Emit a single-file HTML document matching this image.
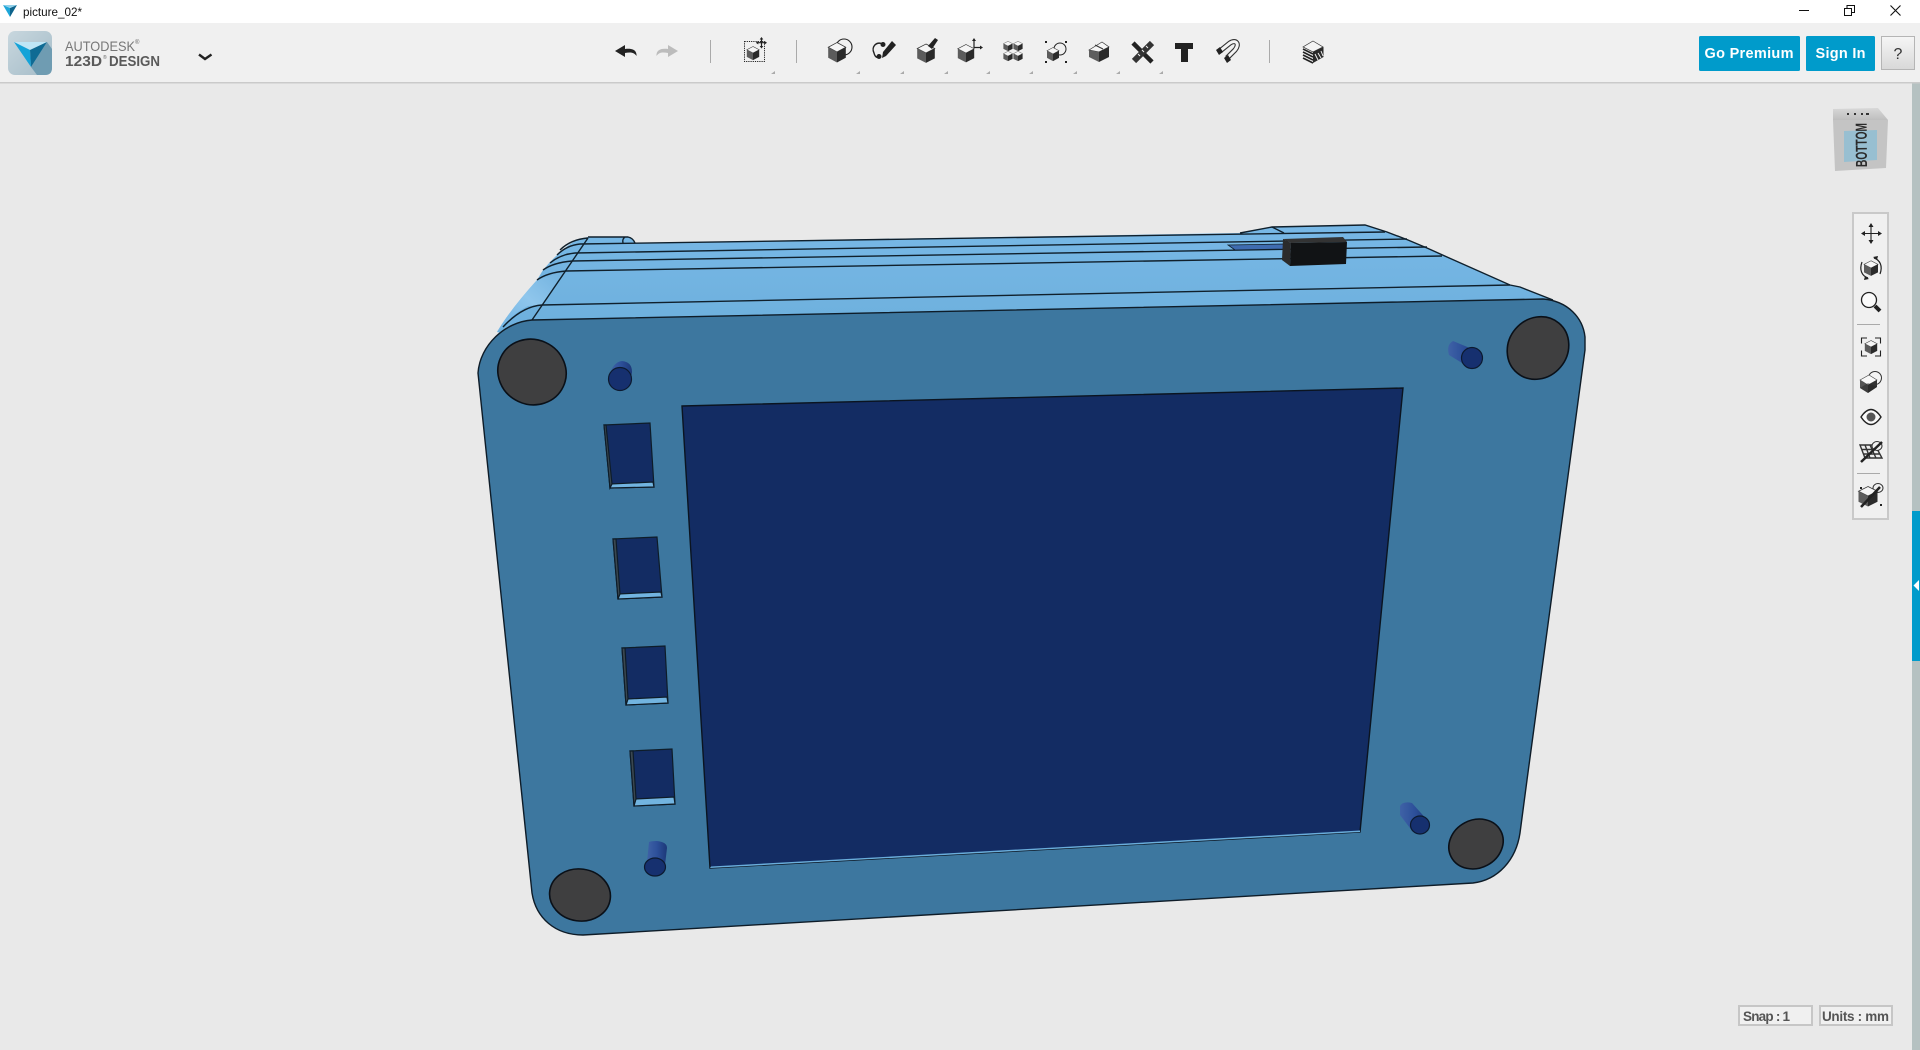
<!DOCTYPE html>
<html><head><meta charset="utf-8"><title>picture_02*</title>
<style>
html,body{margin:0;padding:0;width:1920px;height:1050px;overflow:hidden;background:#e9e9e9}
svg{display:block;position:absolute;left:0;top:0}
text{font-family:"Liberation Sans",sans-serif}
</style></head><body>
<svg width="1920" height="1050" viewBox="0 0 1920 1050" xmlns="http://www.w3.org/2000/svg">
<defs>
<linearGradient id="topg" x1="0" y1="0" x2="0" y2="1"><stop offset="0" stop-color="#78b8e6"/><stop offset="1" stop-color="#6cafdc"/></linearGradient>
<linearGradient id="sideg" x1="0" y1="1" x2="1" y2="0"><stop offset="0" stop-color="#6fb3e3"/><stop offset=".5" stop-color="#8fc6ec"/><stop offset="1" stop-color="#6fb0de"/></linearGradient>
<linearGradient id="logog" x1="0" y1="0" x2="1" y2="1"><stop offset="0" stop-color="#c8d7de"/><stop offset="1" stop-color="#a5bcc8"/></linearGradient>
<linearGradient id="help" x1="0" y1="0" x2="0" y2="1"><stop offset="0" stop-color="#f6f6f6"/><stop offset="1" stop-color="#d8d8d8"/></linearGradient>
<linearGradient id="pegg" x1="0" y1="0" x2="1" y2="0"><stop offset="0" stop-color="#3f62a6"/><stop offset=".5" stop-color="#2d509a"/><stop offset="1" stop-color="#1c3878"/></linearGradient>
<linearGradient id="cubetop" x1="0" y1="0" x2="0" y2="1"><stop offset="0" stop-color="#d8d8d8"/><stop offset="1" stop-color="#bcbcbc"/></linearGradient>
<g id="cube">
<polygon points="0,-10 10,-5 0,0 -10,-5" fill="#f5f5f5" stroke="#333" stroke-width=".8"/>
<polygon points="-10,-5 0,0 0,11 -10,6" fill="#5c5c5c"/>
<polygon points="10,-5 0,0 0,11 10,6" fill="#2a2a2a"/>
</g>
<polygon id="tri" points="0,3 4,0 4,3" fill="#aaa"/>
</defs>

<!-- title bar -->
<rect x="0" y="0" width="1920" height="23" fill="#fff"/>
<polygon points="3,5 10,8 10,17" fill="#1ea6d8"/>
<polygon points="17,5 10,8 10,17" fill="#0e648c"/>
<polygon points="3,5 17,5 10,8" fill="#8fd0ea"/>
<text x="23" y="16" font-size="12" fill="#111" textLength="59" lengthAdjust="spacingAndGlyphs">picture_02*</text>
<line x1="1799" y1="10.5" x2="1809" y2="10.5" stroke="#111" stroke-width="1"/>
<rect x="1844.5" y="8.5" width="7" height="7" fill="none" stroke="#111"/>
<path d="M1847 8.5V5.5H1854.5V12.5H1851.5" fill="none" stroke="#111"/>
<path d="M1890.5 5.5L1900.5 15.5M1900.5 5.5L1890.5 15.5" stroke="#111" stroke-width="1.1"/>

<!-- toolbar -->
<rect x="0" y="23" width="1920" height="59" fill="#f0f0f0"/>
<rect x="0" y="82" width="1920" height="1.5" fill="#cacaca"/>
<rect x="8" y="31" width="44" height="44" rx="7" fill="url(#logog)"/>
<path d="M47 42L31 67L37 75H45Q52 75 52 68V49Z" fill="#6f9cb2"/>
<polygon points="14,42 47,42 30,50" fill="#bfe6f6"/>
<polygon points="14,42 30,50 31,67" fill="#14a3d8"/>
<polygon points="47,42 30,50 31,67" fill="#0f6b94"/>
<text x="65" y="51" font-size="14" fill="#777" textLength="70" lengthAdjust="spacingAndGlyphs">AUTODESK</text>
<text x="135" y="44" font-size="6" fill="#666">®</text>
<text x="65" y="66" font-size="14.5" font-weight="bold" fill="#5a5a5a" textLength="37" lengthAdjust="spacingAndGlyphs">123D</text>
<text x="103" y="59" font-size="5" fill="#666">®</text>
<text x="109" y="66" font-size="14.5" font-weight="bold" fill="#5a5a5a" textLength="51" lengthAdjust="spacingAndGlyphs">DESIGN</text>
<path d="M199 54.5Q205 59 205 59Q205 59 211.5 54.5" fill="none" stroke="#222" stroke-width="2.4"/>

<!-- undo / redo -->
<path d="M615 51L625 45V49C632 48 637 50 636.500 56C634 52 630 52 625 53V57Z" fill="#222"/>
<path d="M678 51L668 45V49C661 48 656 50 656.500 56C659 52 663 52 668 53V57Z" fill="#bcbcbc"/>
<g stroke="#aaa" stroke-width="1"><line x1="710.500" y1="40" x2="710.500" y2="63"/><line x1="796.500" y1="40" x2="796.500" y2="63"/><line x1="1269.500" y1="40" x2="1269.500" y2="63"/></g>

<!-- move -->
<rect x="744.500" y="41.500" width="20" height="20" fill="none" stroke="#222" stroke-width="1" stroke-dasharray="1.200 1"/>
<use href="#cube" transform="translate(753,53) scale(.62,.65)"/>
<path d="M761.500 38V47.500M757 42.700H766" stroke="#222" stroke-width="1.200"/>
<path d="M761.500 37L759.700 39.500H763.300ZM761.500 48.500L759.700 46H763.300ZM755.800 42.700L758.300 41V44.500ZM767 42.700L764.500 41V44.500Z" fill="#222"/>

<!-- primitives -->
<circle cx="844" cy="47" r="8" fill="#f0f0f0" stroke="#222" stroke-width="1.100"/>
<use href="#cube" transform="translate(837,52) scale(.88,.95)"/>
<!-- sketch -->
<path d="M883 44C876 41 871 47 874 53C875 57 877 58 879 57" fill="none" stroke="#222" stroke-width="1.400"/>
<circle cx="883" cy="44.500" r="2.500" fill="#222"/><circle cx="879" cy="56.500" r="2.500" fill="#222"/>
<polygon points="892,41 896,45 886,56 882,58 883,52" fill="#222"/>
<!-- construct -->
<use href="#cube" transform="translate(926,53) scale(.88,.9)"/>
<polygon points="928,46 935,38 938,40 932,49" fill="#222"/>
<!-- modify/transform -->
<use href="#cube" transform="translate(966,53) scale(.82,.85)"/>
<path d="M974 40V47.500H981" fill="none" stroke="#222" stroke-width="1.200"/>
<path d="M974 38L972 41H976ZM983 47.500L980 45.500V49.500Z" fill="#222"/>
<!-- pattern -->
<use href="#cube" transform="translate(1008,46) scale(.46,.47)"/><use href="#cube" transform="translate(1018,46) scale(.46,.47)"/>
<use href="#cube" transform="translate(1008,56) scale(.46,.47)"/><use href="#cube" transform="translate(1018,56) scale(.46,.47)"/>
<!-- group -->
<circle cx="1060" cy="49" r="6" fill="#f0f0f0" stroke="#222" stroke-width="1"/>
<use href="#cube" transform="translate(1053,54) scale(.6,.65)"/>
<g fill="#222"><rect x="1045" y="41" width="2" height="2"/><rect x="1065" y="41" width="2" height="2"/><rect x="1045" y="61" width="2" height="2"/><rect x="1065" y="61" width="2" height="2"/></g>
<!-- combine -->
<polygon points="1089,50 1102,42 1109,47 1099,52" fill="#f5f5f5" stroke="#333" stroke-width=".7"/>
<line x1="1095" y1="45" x2="1103" y2="49" stroke="#333" stroke-width="1"/>
<polygon points="1089,50 1099,52 1099,62 1089,57" fill="#5e5e5e"/>
<polygon points="1099,52 1109,47 1109,57 1099,62" fill="#2a2a2a"/>
<!-- measure -->
<path d="M1133 43L1152 62" stroke="#222" stroke-width="4.500"/>
<path d="M1152 43L1134 61" stroke="#333" stroke-width="6"/>
<path d="M1138 54l2 2M1142 50l2 2M1146 46l2 2" stroke="#f0f0f0" stroke-width="1"/>
<!-- text T -->
<polygon points="1175,43 1193,43 1193,49 1188,49 1188,62 1181,62 1181,49 1175,49" fill="#222"/>
<!-- snap magnet -->
<path d="M1220 51L1230 43C1236 39 1240 44 1235 50L1227 58" fill="none" stroke="#333" stroke-width="5.200"/>
<path d="M1220 51L1230 43C1236 39 1240 44 1235 50L1227 58" fill="none" stroke="#f4f4f4" stroke-width="3"/>
<polygon points="1216,50 1220,47 1223,52 1219,55" fill="#222"/><polygon points="1224,58 1228,55 1231,60 1227,63" fill="#222"/>
<!-- layers -->
<polygon points="1313,41 1323,47 1313,52 1303,47" fill="#f4f4f4" stroke="#333" stroke-width=".7"/>
<path d="M1303 49L1313 54M1303 52L1313 57M1303 55L1313 60M1303 58L1313 63" fill="none" stroke="#222" stroke-width="1.600"/>
<polygon points="1313,52 1323.500,47 1323.500,57 1313,63" fill="#2a2a2a"/>
<path d="M1315 54L1318 60M1318 53L1321 58M1321 51L1323 56" stroke="#eee" stroke-width="1"/>

<!-- toolbar tris -->
<use href="#tri" x="771" y="71"/><use href="#tri" x="856" y="71"/><use href="#tri" x="900" y="71"/>
<use href="#tri" x="944" y="71"/><use href="#tri" x="986" y="71"/><use href="#tri" x="1029" y="71"/>
<use href="#tri" x="1073" y="71"/><use href="#tri" x="1116" y="71"/><use href="#tri" x="1159" y="71"/>

<!-- Buttons -->
<rect x="1699" y="36" width="101" height="35" rx="1.500" fill="#009bcb"/>
<text x="1749" y="58" font-size="14.500" font-weight="bold" fill="#fff" text-anchor="middle" textLength="89" lengthAdjust="spacing">Go Premium</text>
<rect x="1806" y="36" width="69" height="35" rx="1.500" fill="#009bcb"/>
<text x="1840.500" y="58" font-size="14.500" font-weight="bold" fill="#fff" text-anchor="middle" textLength="50" lengthAdjust="spacing">Sign In</text>
<rect x="1881.500" y="36.500" width="33" height="33" fill="url(#help)" stroke="#b5b5b5"/>
<text x="1898" y="59" font-size="16" fill="#333" text-anchor="middle">?</text>

<!-- scrollbar -->
<rect x="1912" y="83.500" width="8" height="966.500" fill="#b5c1c1"/>
<rect x="1912" y="511" width="8" height="150" fill="#009bcb"/>
<polygon points="1913.500,585.500 1919,580 1919,591" fill="#fff"/>

<!-- nav cube -->
<polygon points="1833,109 1878,108 1888,120 1833,121" fill="url(#cubetop)"/>
<polygon points="1833,120 1888,120 1886,168 1835,171" fill="#c4c4c4"/>
<polygon points="1844,131 1877,130 1877,160 1844,162" fill="#98bfd1"/>
<g fill="#333"><rect x="1847" y="113" width="2" height="2"/><rect x="1854" y="113" width="2" height="2"/><rect x="1861" y="113" width="2" height="2"/><rect x="1866" y="113" width="3" height="2"/></g>
<text transform="translate(1867,167) rotate(-90.500)" font-size="16" font-weight="bold" fill="#2b2b2b" textLength="44" lengthAdjust="spacingAndGlyphs">BOTTOM</text>

<!-- right toolbar -->
<rect x="1853" y="213" width="35" height="306" fill="#f0f0f0" stroke="#c9c9c9" stroke-width="2"/>
<path d="M1871 224V243M1862 233.500H1881" stroke="#222" stroke-width="1.100"/>
<path d="M1871 223L1868.500 227H1873.500ZM1871 244L1868.500 240H1873.500ZM1861 233.500L1865 231V236ZM1882 233.500L1878 231V236Z" fill="#222"/>
<use href="#cube" transform="translate(1871,268) scale(.7,.72)"/>
<path d="M1862 262C1859 270 1862 276 1868 278M1880 274C1883 266 1880 260 1874 258" fill="none" stroke="#222" stroke-width="1.200"/>
<path d="M1873 257L1878 256 1877 260ZM1869 279L1864 280 1865 276Z" fill="#222"/>
<circle cx="1869" cy="300" r="7.500" fill="#fbfbfb" stroke="#222" stroke-width="1.300"/>
<path d="M1875 306L1880 311" stroke="#222" stroke-width="4"/>
<line x1="1857" y1="324.500" x2="1880" y2="324.500" stroke="#aaa"/>
<path d="M1867 338H1861.500V343.500M1875 338H1880.500V343.500M1867 356H1861.500V350.500M1875 356H1880.500V350.500" fill="none" stroke="#222" stroke-width="1.100"/>
<use href="#cube" transform="translate(1871,347) scale(.62,.65)"/>
<circle cx="1875" cy="378" r="6.500" fill="#f4f4f4" stroke="#333" stroke-width="1"/>
<polygon points="1869,375 1877,380 1868,385 1860,380" fill="#f8f8f8" stroke="#444" stroke-width=".6"/>
<polygon points="1860,380 1868,385 1868,393 1860,388" fill="#555"/>
<polygon points="1877,380 1868,385 1868,393 1877,387" fill="#333"/>
<path d="M1860 388L1868 383L1877 387L1868 393Z" fill="#222" opacity=".45"/>
<path d="M1861 417Q1871 402 1881 417Q1871 432 1861 417Z" fill="#fafafa" stroke="#222" stroke-width="1.400"/>
<circle cx="1871" cy="417" r="4.500" fill="#555"/>
<path d="M1860 445H1875L1882 458H1865ZM1865 445L1870 458M1870 445L1876 458M1862 449.500H1878M1863 454H1880" fill="#eee" stroke="#333" stroke-width="1.400"/>
<ellipse cx="1877" cy="446" rx="5" ry="4.500" fill="#f0f0f0" stroke="#333" stroke-width="1"/>
<line x1="1861" y1="462" x2="1882" y2="442" stroke="#222" stroke-width="2.500"/>
<line x1="1857" y1="473.500" x2="1880" y2="473.500" stroke="#aaa"/>
<ellipse cx="1878" cy="488" rx="5" ry="4.500" fill="#f0f0f0" stroke="#333" stroke-width="1"/>
<use href="#cube" transform="translate(1868,496) scale(.95,.95)"/>
<line x1="1861" y1="507" x2="1880" y2="487" stroke="#222" stroke-width="2.500"/>
<rect x="1860" y="487" width="2" height="2" fill="#222"/><rect x="1880" y="504" width="2" height="2" fill="#222"/>

<!-- status boxes -->
<rect x="1739" y="1006" width="73" height="19" fill="#f0f0f0" stroke="#c6c6c6" stroke-width="2"/>
<text x="1743" y="1021" font-size="13.500" font-weight="bold" fill="#555" textLength="47" lengthAdjust="spacing">Snap : 1</text>
<rect x="1820" y="1006" width="72" height="19" fill="#f0f0f0" stroke="#c6c6c6" stroke-width="2"/>
<text x="1822" y="1021" font-size="13.500" font-weight="bold" fill="#555" textLength="67" lengthAdjust="spacing">Units : mm</text>

<!-- MODEL -->
<path d="M497 332Q510 310 537 280L543 270L550 262L557 255L565 248Q575 239 588 237L628 237Q633 238 635 243L1240 233L1272 227L1365 225L1387 232L1408 240L1427 248L1447 257L1510 285L1520 287L1553 300L1543 320L530 340Z" fill="url(#topg)"/>
<path d="M497 332Q510 310 537 280L566 271L542 305L528 306Q512 314 503 327Z" fill="url(#sideg)"/>
<g fill="none" stroke="#10202c" stroke-width="1.400">
<path d="M588 237L628 237Q633 238 635 243M625 237Q622 239 623 243"/>
<path d="M588 238C575 239 566 244 560 250M580 244C570 245 562 250 557 255M575 253C565 254 556 258 550 263M572 261C560 262 550 265 543 270M566 271C553 272 544 275 537 280M542 305C528 306 515 314 503 327"/>
<path d="M580 244L1385 232"/>
<path d="M575 253L1407 239"/>
<path d="M572 261L1427 247"/>
<path d="M566 271L1442 256"/>
<path d="M542 305L1510 285"/>
<path d="M588 238L532 320"/>
<path d="M1240 233L1272 227L1365 225L1387 232L1408 240L1427 248L1447 257L1510 285L1520 287L1553 300"/>
<path d="M1272 227L1284 233"/>
</g>
<!-- strip & black block -->
<polygon points="1228,245 1284,244 1284,249 1235,250" fill="#3f6cb0" stroke="#10202c" stroke-width=".8"/>
<polygon points="1283,239 1343,237 1347,242 1291,243" fill="#333"/>
<polygon points="1283,239 1291,243 1290,266 1282,260" fill="#2b2b2b"/>
<polygon points="1291,243 1347,242 1346,264 1290,266" fill="#111315"/>

<!-- front face -->
<path d="M532 320L1543 299C1568 301 1583 318 1585 337L1585 350L1527 780L1520 833C1516 860 1498 880 1473 883L583 935C555 935 536 918 532 893L478 373C480 345 505 322 532 320Z" fill="#3d779f" stroke="#0e1c28" stroke-width="1.400"/>

<!-- screen -->
<polygon points="682,406 1403,388 1360,832 710,868" fill="#132c63" stroke="#0b1420" stroke-width="1.400"/>
<polygon points="711,866.500 1360,830.500 1360,832 710,868" fill="#6aaedc"/>

<!-- slots -->
<g stroke="#0e1c28" stroke-width="1.200">
<polygon points="604,425 650,423 654,487 610,488" fill="#132c63"/>
<polygon points="610,484 653,482 654,487 610,488" fill="#72b4e0"/>
<polygon points="604,425 606,425 612,484 610,488" fill="#3a4750"/>
<polygon points="613,539 657,537 662,597 618,599" fill="#132c63"/>
<polygon points="618,594 661,592 662,597 618,599" fill="#72b4e0"/>
<polygon points="613,539 616,539 620,594 618,599" fill="#3a4750"/>
<polygon points="622,648 665,646 668,703 626,705" fill="#132c63"/>
<polygon points="627,699 667,697 668,703 626,705" fill="#72b4e0"/>
<polygon points="622,648 625,648 628,699 626,705" fill="#3a4750"/>
<polygon points="630,751 672,749 675,804 634,806" fill="#132c63"/>
<polygon points="635,799 674,797 675,804 634,806" fill="#72b4e0"/>
<polygon points="630,751 633,751 636,799 634,806" fill="#3a4750"/>
</g>

<!-- feet -->
<g fill="#3f3f40" stroke="#0a1018" stroke-width="1.600">
<ellipse cx="532" cy="372" rx="34.500" ry="32.500" transform="rotate(25 532 372)"/>
<ellipse cx="1538" cy="348" rx="32.500" ry="29.500" transform="rotate(-50 1538 348)"/>
<ellipse cx="580" cy="895" rx="30.500" ry="26" transform="rotate(8 580 895)"/>
<ellipse cx="1476" cy="844" rx="28" ry="24" transform="rotate(-28 1476 844)"/>
</g>

<!-- pegs -->
<path d="M610 373Q614 362 622 361Q632 362 632 372L631 379L612 382Z" fill="url(#pegg)"/>
<circle cx="620" cy="379" r="11.500" fill="#16306f" stroke="#0c1a30" stroke-width="1.200"/>
<path d="M1453 341L1477 351L1467 366L1449 355Q1446 345 1453 341Z" fill="url(#pegg)"/>
<circle cx="1472" cy="358" r="10.500" fill="#16306f" stroke="#0c1a30" stroke-width="1.200"/>
<path d="M649 842Q651 841 657 841Q667 842 667 848L665 865L647 862Z" fill="url(#pegg)"/>
<ellipse cx="655" cy="867" rx="10.500" ry="9" fill="#16306f" stroke="#0c1a30" stroke-width="1.200"/>
<path d="M1400 806Q1403 801 1412 803L1429 822L1413 832L1400 815Z" fill="url(#pegg)"/>
<ellipse cx="1420" cy="825" rx="9.500" ry="9" fill="#16306f" stroke="#0c1a30" stroke-width="1.200"/>
</svg>
</body></html>
